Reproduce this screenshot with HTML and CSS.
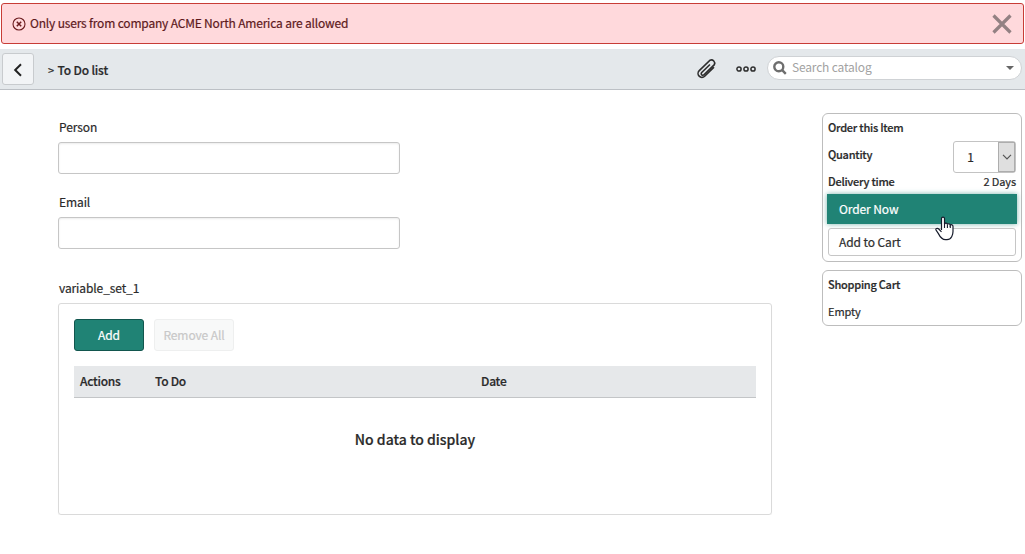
FILE: index.html
```
<!DOCTYPE html>
<html lang="en">
<head>
    <meta charset="utf-8">
    <title>To Do list</title>
    <link rel="stylesheet" href="styles.css">
</head>
<body>
    <div class="alert">
        <svg class="alert_icon" width="14" height="14" viewBox="0 0 14 14">
            <circle cx="7" cy="7" r="6"/>
            <path class="cross" d="M4.8 4.8l4.4 4.4M9.2 4.8l-4.4 4.4"/>
        </svg>
        <span class="alert_text">Only users from company ACME North America are allowed</span>
        <svg class="alert_close" width="20" height="20" viewBox="0 0 20 20">
            <path d="M1.5 1.5l17 17M18.5 1.5l-17 17"/>
        </svg>
    </div>

    <div class="navbar">
        <button class="btn_back">
            <svg width="10" height="14" viewBox="0 0 10 14"><path d="M8 1.3L2.2 7L8 12.7"/></svg>
        </button>
        <div class="crumb"><span class="crumb_arrow">&gt;</span> <b>To Do list</b></div>
        <svg class="clip" width="22" height="22" viewBox="0 0 22 22">
            <path transform="translate(11 10.6) rotate(46)" d="M3.9-6V7a3.9 3.9 0 0 1-7.8 0V-8a3.3 3.3 0 0 1 6.2 0V6.5a1.6 1.6 0 0 1-3.2 0V-5"/>
        </svg>
        <svg class="dots" width="22" height="8" viewBox="0 0 22 8">
            <circle cx="4" cy="4" r="2.1"/><circle cx="11" cy="4" r="2.1"/><circle cx="18" cy="4" r="2.1"/>
        </svg>
        <div class="search">
            <svg class="search_icon" width="14" height="14" viewBox="0 0 14 14">
                <circle cx="5.8" cy="5.8" r="4.5"/><path d="M9.2 9.2l3.6 3.6"/>
            </svg>
            <span class="search_text">Search catalog</span>
            <span class="caret"></span>
        </div>
    </div>

    <div class="content">
        <div class="form">
            <label class="label" for="person">Person</label>
            <input class="field" id="person" type="text">
            <label class="label" for="email">Email</label>
            <input class="field" id="email" type="text">
            <div class="label label_set">variable_set_1</div>
            <div class="set">
                <div class="set_buttons">
                    <button class="btn btn_green">Add</button>
                    <button class="btn btn_off" disabled>Remove All</button>
                </div>
                <div class="table_head">
                    <span>Actions</span><span>To Do</span><span>Date</span>
                </div>
                <div class="no_data">No data to display</div>
            </div>
        </div>

        <div class="side">
            <div class="card order">
                <div class="row"><b>Order this Item</b></div>
                <div class="row"><b>Quantity</b>
                    <div class="qty">
                        <span class="qty_value">1</span>
                        <span class="qty_arrow"><svg width="10" height="6" viewBox="0 0 10 6"><path d="M1 .8l4 4l4-4"/></svg></span>
                    </div>
                </div>
                <div class="row"><b>Delivery time</b><span>2 Days</span></div>
                <button class="btn_order">Order Now</button>
                <button class="btn_cart">Add to Cart</button>
                <svg class="pointer" width="20" height="25" viewBox="0 0 20 25">
                    <path class="hand" d="M6.5 14V2.6C6.5.5 9.5.5 9.5 2.6V8C9.8 6.6 12.4 6.8 12.4 8.5C12.9 7.2 15.3 7.7 15.3 9.2C15.9 8.3 18 8.8 18 10.4V15.6C18 18.6 16.5 23.7 12 23.7H10.5C6.3 23.7 4.8 20.4 3.4 17.6L1 14C.4 12.6 2.3 11.7 3.5 12.8L6.5 15.8"/>
                    <path class="finger" d="M9.5 7.5V12M12.4 8.5V12M15.3 9.2V12"/>
                </svg>
            </div>
            <div class="card cart">
                <div class="row"><b>Shopping Cart</b></div>
                <div class="row">Empty</div>
            </div>
        </div>
    </div>
</body>
</html>
```
FILE: styles.css
```
* { box-sizing: border-box; }
body { margin: 0; background: #fff; color: #2a2a2a; font-family: "Noto Sans CJK SC", "Noto Sans", sans-serif; font-size: 12px; line-height: 18px; letter-spacing: -0.1px; -webkit-text-stroke: 0.2px; }
button { font-family: inherit; letter-spacing: inherit; padding: 0; cursor: pointer; }
svg { display: block; flex: none; fill: none; }
b { font-weight: 500; }

.alert { display: flex; align-items: center; height: 41px; margin: 3px 1px 5px; padding: 0 11px 0 10px; border: 1px solid #c83c36; border-radius: 3px; background: #ffd9dc; color: #5e1a1c; }
.alert_icon { stroke: #6b1c1f; stroke-width: 1.1; }
.alert_icon .cross { stroke-width: 1.5; }
.alert_text { margin: 0 0 2px 4px; flex: 1; letter-spacing: -0.18px; }
.alert_close { stroke: #938183; stroke-width: 3.2; }

.navbar { display: flex; align-items: center; height: 41px; padding: 0 3px 0 2px; background: #e4e8eb; border-bottom: 1px solid #bcc0c5; }
.btn_back { display: flex; align-items: center; justify-content: center; width: 32px; height: 32px; border: 1px solid #c8cbce; border-radius: 3px; background: #f2f4f6; }
.btn_back svg { margin-top: 2px; stroke: #222; stroke-width: 2; }
.crumb { flex: 1; margin: 2px 0 0 14px; letter-spacing: -0.17px; }
.crumb_arrow { font-size: 11px; margin-right: 1px; }
.clip { stroke: #2e2e2e; stroke-width: 1.6; margin-right: 17px; }
.dots { stroke: #2e2e2e; stroke-width: 1.5; margin-right: 10px; }
.search { display: flex; align-items: center; width: 255px; height: 24px; margin-bottom: 3px; padding: 0 7px 0 5px; border: 1px solid #cfd2d5; border-radius: 12px; background: #fff; color: #a2a2a2; -webkit-text-stroke: 0; }
.search_icon { stroke: #6e6e6e; stroke-width: 2.4; }
.search_text { flex: 1; margin: 0 0 2px 5px; letter-spacing: -0.18px; }
.caret { border: 4px solid transparent; border-top-color: #666; border-bottom: 0; }

.content { display: flex; justify-content: space-between; padding: 23px 3px 0 58px; }
.form { width: 714px; padding-top: 5px; }
.label { display: block; height: 24px; padding-left: 1px; }
.label_set { margin-top: 30px; }
.field { display: block; width: 342px; height: 32px; margin-bottom: 19px; border: 1px solid #c6c6c6; border-radius: 3px; box-shadow: inset 0 1px 2px rgba(0,0,0,.08); }
.set { height: 212px; padding: 15px; border: 1px solid #dadada; border-radius: 3px; box-shadow: 0 1px 1px rgba(0,0,0,.05); }
.set_buttons { display: flex; gap: 10px; }
.btn { height: 32px; padding-bottom: 2px; border-radius: 3px; font-size: 12px; }
.btn_green { width: 70px; background: #208375; border: 1px solid #12564e; color: #fff; }
.btn_off { width: 80px; background: #f8f9f9; border: 1px solid #eeefef; color: #c8c8c8; }
.table_head { display: grid; grid-template-columns: 75px 326px 1fr; align-items: center; height: 32px; margin-top: 15px; padding: 0 0 1px 6px; background: #e6e8ea; border-bottom: 1px solid #c3c5c7; font-weight: 500; letter-spacing: -0.25px; }
.no_data { margin-top: 31px; text-align: center; font-size: 14px; line-height: 20px; font-weight: 500; letter-spacing: 0; }

.side { width: 200px; font-size: 11px; }
.side b { letter-spacing: -0.25px; }
.card { border: 1px solid #bdbdbd; border-radius: 6px; padding: 0 5px; }
.row { display: flex; align-items: center; justify-content: space-between; height: 27px; padding-bottom: 2px; }
.order { position: relative; height: 149px; }
.qty { display: flex; width: 63px; height: 32px; margin-top: 6px; border: 1px solid #c3c3c3; border-radius: 3px; font-size: 12px; }
.qty_value { flex: 1; text-align: center; line-height: 29px; padding-right: 11px; }
.qty_arrow { display: flex; align-items: center; justify-content: center; width: 17px; border: 1px solid #adadad; background: #dfdfdf; }
.qty_arrow svg { stroke: #555; stroke-width: 1.2; }
.btn_order, .btn_cart { display: block; text-align: left; font-size: 12px; }
.btn_order { width: 190px; height: 30px; margin: -1px 0 4px -1px; padding: 0 0 2px 12px; border: 0; background: #208375; color: #fff; box-shadow: 0 0 5px rgba(32,131,117,.6); }
.btn_cart { width: 188px; height: 28px; padding: 0 0 2px 10px; border: 1px solid #c6c6c6; border-radius: 3px; background: #fff; color: #2e2e2e; }
.pointer { position: absolute; left: 112px; top: 102px; }
.hand { fill: #fff; stroke: #151a2a; stroke-width: 1.2; }
.finger { stroke: #151a2a; stroke-width: 1.1; }
.cart { height: 56px; margin-top: 8px; }
```
